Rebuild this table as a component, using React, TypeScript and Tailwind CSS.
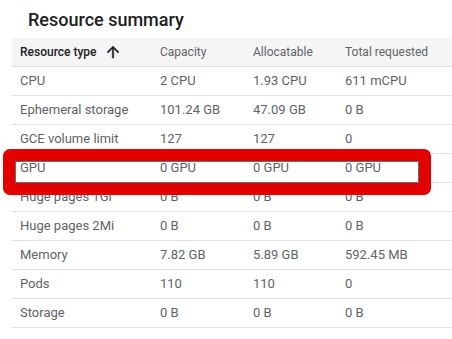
import React from "react";

const rows: [string, string, string, string][] = [
  ["CPU", "2 CPU", "1.93 CPU", "611 mCPU"],
  ["Ephemeral storage", "101.24 GB", "47.09 GB", "0 B"],
  ["GCE volume limit", "127", "127", "0"],
  ["GPU", "0 GPU", "0 GPU", "0 GPU"],
  ["Huge pages 1Gi", "0 B", "0 B", "0 B"],
  ["Huge pages 2Mi", "0 B", "0 B", "0 B"],
  ["Memory", "7.82 GB", "5.89 GB", "592.45 MB"],
  ["Pods", "110", "110", "0"],
  ["Storage", "0 B", "0 B", "0 B"],
];

const grid = "grid grid-cols-[140px_93px_92px_1fr] items-center";

export default function App() {
  return (
    <div
      className="relative w-[452px] h-[339px] bg-white overflow-hidden"
      style={{ fontFamily: "Roboto, 'Liberation Sans', sans-serif" }}
    >
      <div className="pt-[8px] pl-[28px] h-[38px]">
        <h2 className="text-[18px] leading-[24px] font-medium text-[#202124]">Resource summary</h2>
      </div>
      <div className="ml-[12px]">
        <div className={`${grid} h-[29px] bg-[#f5f5f5] border-b border-[#e0e0e0] text-[12px]`}>
          <div className="pl-[8px] flex items-center gap-[7px] font-medium text-[#202124]">
            <span>Resource type</span>
            <svg width="18" height="18" viewBox="0 0 24 24" fill="#202124" stroke="#202124" strokeWidth="0.6">
              <path d="M4 12l1.41 1.41L11 7.83V20h2V7.83l5.58 5.59L20 12l-8-8-8 8z" />
            </svg>
          </div>
          <div className="pl-[8px] text-[#5f6368]">Capacity</div>
          <div className="pl-[8px] text-[#5f6368]">Allocatable</div>
          <div className="pl-[8px] text-[#5f6368]">Total requested</div>
        </div>
        {rows.map((r) => (
          <div key={r[0]} className={`${grid} h-[29px] border-b border-[#e0e0e0] text-[13px] text-[#5f6368]`}>
            {r.map((c, i) => (
              <div key={i} className="pl-[8px] whitespace-nowrap">
                {c}
              </div>
            ))}
          </div>
        ))}
      </div>
      <div className="absolute left-[3px] top-[149px] w-[428px] h-[46px] rounded-[7px] border-[12px] border-[#e30000]">
        <div className="w-full h-full border border-[#6b6b6b]" />
      </div>
    </div>
  );
}
